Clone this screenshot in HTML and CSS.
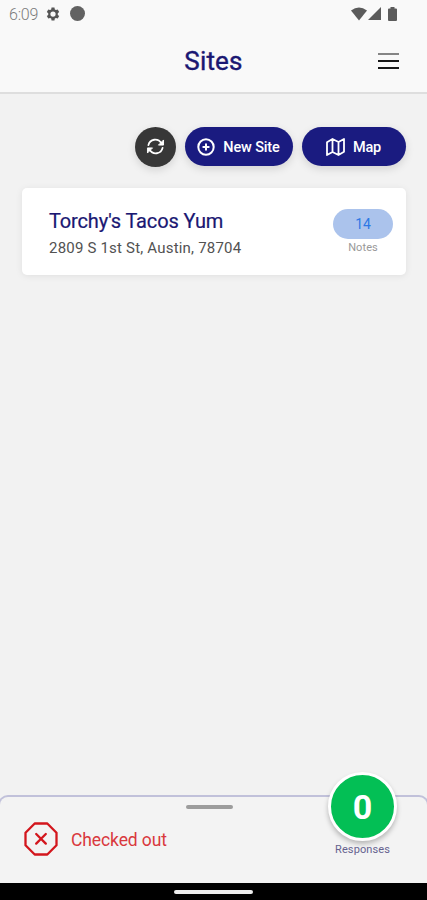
FILE: index.html
```html
<!DOCTYPE html>
<html lang="en">
<head>
<meta charset="utf-8">
<title>Sites</title>
<link rel="stylesheet" href="styles.css">
</head>
<body>
<div class="app">
  <header class="header">
    <div class="status">
      <span class="clock">6:09</span>
      <svg class="gear" width="14" height="14" viewBox="0 0 24 24"><path fill="#555" fill-rule="evenodd" d="M9.500 1h5l.6 3.200 2 1.100 3-1.100 2.500 4.200-2.400 2.100v3l2.400 2.100-2.500 4.200-3-1.100-2 1.100-.6 3.200h-5l-.6-3.200-2-1.100-3 1.100-2.500-4.200 2.400-2.100v-3L1.400 8.400l2.500-4.200 3 1.100 2-1.100zM12 7.500a4.500 4.500 0 1 0 0 9 4.500 4.500 0 0 0 0-9z"/></svg>
      <span class="dot"></span>
      <span class="signals">
        <svg width="16" height="14" viewBox="0 0 16 14"><path fill="#5b5b5b" d="M0 3.500Q8-2.500 16 3.500L8 13.500z"/></svg>
        <svg width="13" height="13" viewBox="0 0 13 13"><path fill="#5b5b5b" d="M13 0v13H0z"/></svg>
        <svg class="battery" width="9" height="14" viewBox="0 0 9 14"><path fill="#5b5b5b" d="M2.500 0h4v1.500H8q1 0 1 1V13q0 1-1 1H1q-1 0-1-1V2.500q0-1 1-1h1.500z"/></svg>
      </span>
    </div>
    <div class="titlebar">
      <h1>Sites</h1>
      <div class="menu"><i class="faded"></i><i></i><i></i></div>
    </div>
  </header>
  <main>
    <div class="actions">
      <button class="refresh" aria-label="Refresh">
        <svg width="19" height="17" viewBox="0 0 20 18" fill="none" stroke="#fff" stroke-width="1.900" stroke-linecap="round" stroke-linejoin="round"><path d="M2.500 7.500C4 1 12.500-.5 16.500 5.800M17.500 10.500C16 17 7.500 18.500 3.500 12.200"/><path fill="#fff" stroke-width="1" d="M18.500 2.500v5h-5zM1.500 15.500v-5h5z"/></svg>
      </button>
      <button class="pill pill-new">
        <svg width="18" height="18" viewBox="0 0 18 18" fill="none" stroke="#fff" stroke-width="2" stroke-linecap="round"><circle cx="9" cy="9" r="7.700"/><path d="M9 6.300v5.400M6.300 9h5.400"/></svg>
        <span>New Site</span>
      </button>
      <button class="pill pill-map">
        <svg width="19" height="18" viewBox="0 0 19 18" fill="none" stroke="#fff" stroke-width="1.800" stroke-linejoin="round"><path d="M1 4.200 6.500 1l6 3L18 1v12.800L12.500 17l-6-3L1 17zM6.500 1v13M12.500 4v13"/></svg>
        <span>Map</span>
      </button>
    </div>
    <section class="card">
      <div class="site">
        <h2>Torchy's Tacos Yum</h2>
        <p>2809 S 1st St, Austin, 78704</p>
      </div>
      <div class="notes">
        <span class="count">14</span>
        <span class="caption">Notes</span>
      </div>
    </section>
  </main>
  <footer class="sheet">
    <div class="handle"></div>
    <div class="check">
      <svg width="34" height="34" viewBox="0 0 34 34" fill="none" stroke="#d3161d" stroke-width="2.300" stroke-linejoin="round"><path d="M10.700 1.500h12.600l9.200 9.200v12.600l-9.200 9.200H10.700l-9.200-9.200V10.700z"/><path stroke-linecap="round" d="m12.200 12 9.600 9.600m0-9.600-9.600 9.600"/></svg>
      <span>Checked out</span>
    </div>
    <div class="responses">
      <span class="bubble">0</span>
      <span class="label">Responses</span>
    </div>
  </footer>
  <div class="navbar"><i></i></div>
</div>
</body>
</html>
```

FILE: styles.css
```css
* { box-sizing: border-box; }
body { margin: 0; background: #f2f2f2; font-family: Roboto, sans-serif; }
h1, h2, p { margin: 0; }
svg { display: block; flex: none; }
.app { width: 427px; height: 900px; display: flex; flex-direction: column; overflow: hidden; }

.header { height: 94px; background: #f9f9f9; border-bottom: 2px solid #dedede; }
.status { height: 27px; display: flex; align-items: center; padding: 0 30px 0 9px; }
.clock { width: 30px; padding-top: 1px; font-size: 16px; letter-spacing: -.2px; color: #7b7b7b; font-weight: 300; }
.gear { margin-left: 7px; }
.dot { width: 15px; height: 15px; margin-left: 10px; border-radius: 50%; background: #626262; }
.signals { margin-left: auto; display: flex; align-items: center; gap: 1px; }
.battery { margin-left: 6px; }
.titlebar { height: 65px; display: grid; grid-template-columns: 1fr auto 1fr; align-items: center; padding: 3px 28px 0; }
h1 { grid-column: 2; font-size: 26px; line-height: 32px; font-weight: 400; letter-spacing: .2px; color: #1a1772; -webkit-text-stroke: .4px #1a1772; }
.menu { justify-self: end; width: 21px; display: grid; gap: 5px; }
.menu i { height: 2px; background: #171717; }
.menu .faded { background: #858585; }

main { flex: 1; padding: 33px 21px 0 22px; }
.actions { height: 40px; display: flex; justify-content: flex-end; align-items: flex-start; gap: 9px; }
button { border: 0; padding: 0; font-family: inherit; color: #fff; display: flex; align-items: center; justify-content: center; box-shadow: 0 3px 9px rgba(0, 0, 0, .13); }
.refresh { width: 41px; height: 40px; padding: 0 1px 1px 0; border-radius: 50%; background: #373737; }
.pill { height: 39px; padding-right: 1px; border-radius: 20px; background: #1a1b80; gap: 8px; font-size: 14.5px; font-weight: 500; }
.pill span { padding-top: 2px; }
.pill-new { width: 108px; letter-spacing: -.15px; }
.pill-map { width: 104px; letter-spacing: -.2px; }
.card { height: 87px; margin-top: 21px; display: flex; justify-content: space-between; background: #fff; border-radius: 5px; padding: 21px 13px 0 27px; box-shadow: 0 1px 7px rgba(0, 0, 0, .08); }
h2 { font-size: 20px; line-height: 24px; font-weight: 400; letter-spacing: -.14px; color: #1a1772; -webkit-text-stroke: .2px #1a1772; }
.site p { margin-top: 4px; font-size: 15px; line-height: 22px; letter-spacing: .2px; color: #525252; }
.notes { width: 60px; display: flex; flex-direction: column; align-items: center; }
.count { width: 60px; height: 30px; line-height: 31px; border-radius: 15px; background: #abc3ec; text-align: center; font-size: 14px; color: #2d79e5; }
.caption { font-size: 11px; line-height: 17px; letter-spacing: .1px; color: #999; }

.sheet { height: 88px; margin: 0 -2px; border: 2px solid #c1c1da; border-bottom: 0; border-radius: 10px 10px 0 0; background: #f3f3f3; position: relative; }
.handle { width: 47px; height: 4px; margin: 8px 0 0 186px; border-radius: 2px; background: #9c9c9c; }
.check { display: flex; align-items: center; gap: 13px; margin: 13px 0 0 24px; font-size: 17.500px; letter-spacing: -.1px; color: #d9383d; }
.check span { padding-top: 2px; }
.responses { position: absolute; top: -25px; left: 327px; width: 71px; display: flex; flex-direction: column; align-items: center; }
.bubble { width: 69px; height: 69px; border: 3px solid #fff; border-radius: 50%; background: #03bf55; color: #fff; font-size: 34px; line-height: 65px; font-weight: 700; text-align: center; box-shadow: 0 3px 5px rgba(0, 0, 0, .25); }
.label { margin-top: 1px; font-size: 11px; line-height: 16px; letter-spacing: .1px; color: #65628f; }
.navbar { height: 17px; background: #000; display: flex; justify-content: center; padding-top: 7px; }
.navbar i { width: 79px; height: 4px; border-radius: 2px; background: #eee; }
```
